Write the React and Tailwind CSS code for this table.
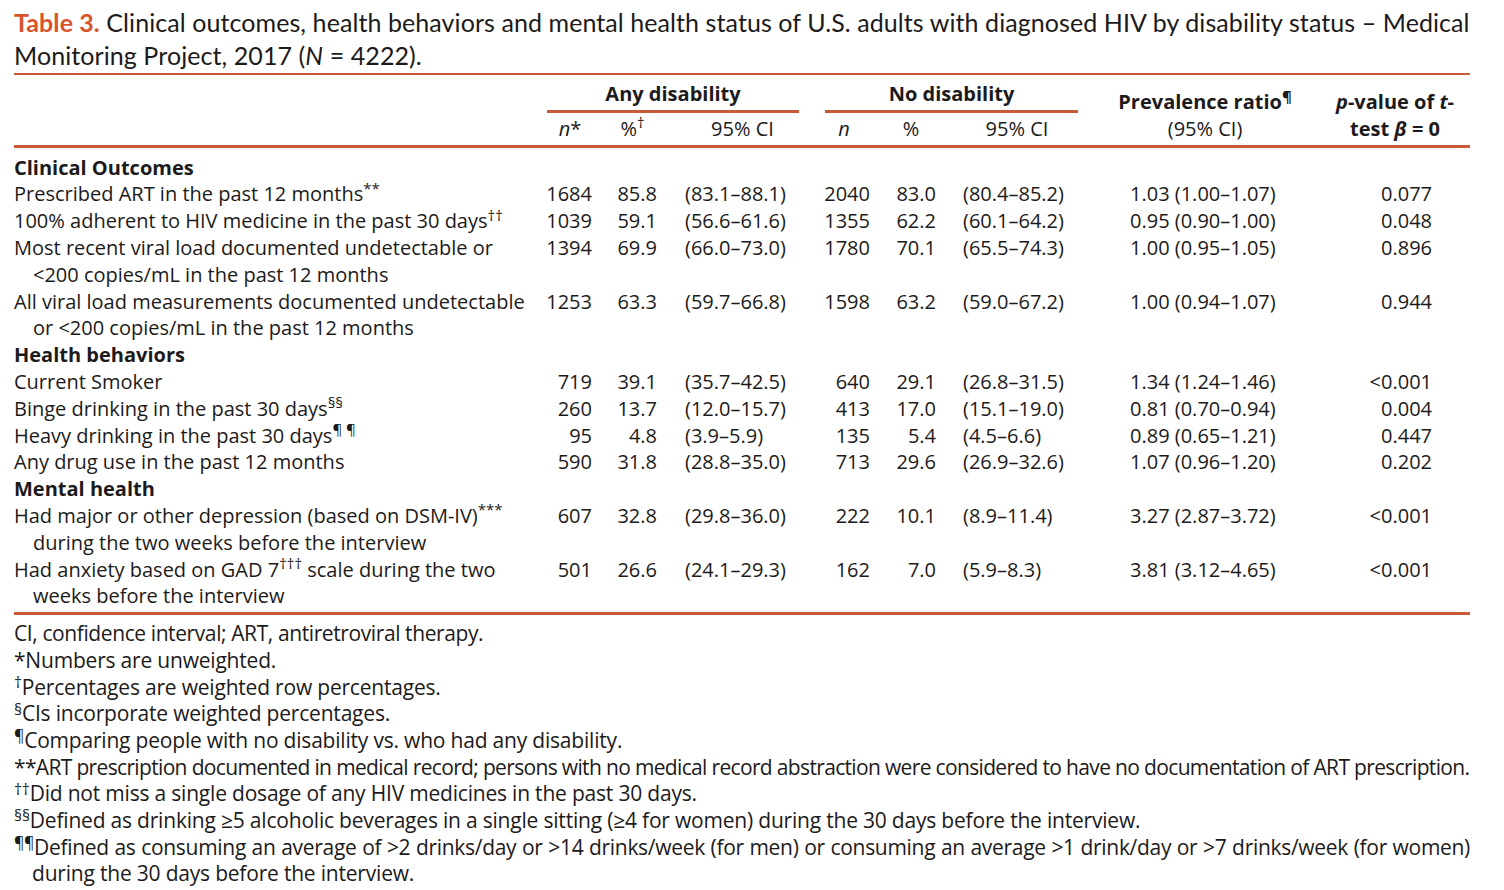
const rule = 'border-[#c75b39]';

const rows = [
  { section: 'Clinical Outcomes' },
  { label: <>Prescribed ART in the past 12 months<sup>**</sup></>, a: ['1684', '85.8', '(83.1–88.1)'], b: ['2040', '83.0', '(80.4–85.2)'], pr: '1.03 (1.00–1.07)', p: '0.077' },
  { label: <>100% adherent to HIV medicine in the past 30 days<sup>††</sup></>, a: ['1039', '59.1', '(56.6–61.6)'], b: ['1355', '62.2', '(60.1–64.2)'], pr: '0.95 (0.90–1.00)', p: '0.048' },
  { label: <>Most recent viral load documented undetectable or<br />&lt;200 copies/mL in the past 12 months</>, a: ['1394', '69.9', '(66.0–73.0)'], b: ['1780', '70.1', '(65.5–74.3)'], pr: '1.00 (0.95–1.05)', p: '0.896' },
  { label: <>All viral load measurements documented undetectable<br />or &lt;200 copies/mL in the past 12 months</>, a: ['1253', '63.3', '(59.7–66.8)'], b: ['1598', '63.2', '(59.0–67.2)'], pr: '1.00 (0.94–1.07)', p: '0.944' },
  { section: 'Health behaviors' },
  { label: 'Current Smoker', a: ['719', '39.1', '(35.7–42.5)'], b: ['640', '29.1', '(26.8–31.5)'], pr: '1.34 (1.24–1.46)', p: '<0.001' },
  { label: <>Binge drinking in the past 30 days<sup>§§</sup></>, a: ['260', '13.7', '(12.0–15.7)'], b: ['413', '17.0', '(15.1–19.0)'], pr: '0.81 (0.70–0.94)', p: '0.004' },
  { label: <>Heavy drinking in the past 30 days<sup>¶ ¶</sup></>, a: ['95', '4.8', '(3.9–5.9)'], b: ['135', '5.4', '(4.5–6.6)'], pr: '0.89 (0.65–1.21)', p: '0.447' },
  { label: 'Any drug use in the past 12 months', a: ['590', '31.8', '(28.8–35.0)'], b: ['713', '29.6', '(26.9–32.6)'], pr: '1.07 (0.96–1.20)', p: '0.202' },
  { section: 'Mental health' },
  { label: <>Had major or other depression (based on DSM-IV)<sup>***</sup><br />during the two weeks before the interview</>, a: ['607', '32.8', '(29.8–36.0)'], b: ['222', '10.1', '(8.9–11.4)'], pr: '3.27 (2.87–3.72)', p: '<0.001' },
  { label: <>Had anxiety based on GAD 7<sup>†††</sup> scale during the two<br />weeks before the interview</>, a: ['501', '26.6', '(24.1–29.3)'], b: ['162', '7.0', '(5.9–8.3)'], pr: '3.81 (3.12–4.65)', p: '<0.001' },
];

const Mark = ({ children }) => <sup className="-top-[0.42em]">{children}</sup>;

const App = () => {
  return (
    <div className="min-h-[890px] bg-white text-[#1c1a1a] font-['Open_Sans',sans-serif]">
      <div className="w-[1456px] ml-[14px] pt-[6px]">
        <h1 className="font-['Lato',sans-serif] text-[25px] leading-[33px] tracking-[0.08px]">
          <span className="font-bold text-[#d9542b]">Table 3.</span> Clinical outcomes, health behaviors and mental health status of U.S. adults with diagnosed HIV by disability status – Medical<br />
          Monitoring Project, 2017 (<i>N</i> = 4222).
        </h1>

        <div className={`mt-[1px] border-t-2 ${rule}`}>
          <table className="w-full table-fixed border-collapse text-[20px] leading-[26.8px]">
            <colgroup>
              <col className="w-[526px]" />
              <col className="w-[60px]" />
              <col className="w-[65px]" />
              <col className="w-[145px]" />
              <col className="w-[68px]" />
              <col className="w-[66px]" />
              <col className="w-[146px]" />
              <col className="w-[230px]" />
              <col className="w-[150px]" />
            </colgroup>
            <thead className={`border-b-[3px] ${rule}`}>
              <tr>
                <th></th>
                <th colSpan={3} className="p-0 pt-[6px] font-bold">
                  <div className={`ml-[7px] mr-[11px] border-b-[3px] ${rule} pb-[2px]`}>Any disability</div>
                </th>
                <th colSpan={3} className="p-0 pt-[6px] font-bold">
                  <div className={`ml-[15px] mr-[12px] border-b-[3px] ${rule} pb-[2px]`}>No disability</div>
                </th>
                <th rowSpan={2} className="p-0 pb-[2px] align-bottom">
                  <div className="font-bold">Prevalence ratio<sup>¶</sup></div>
                  <div className="font-normal">(95% CI)</div>
                </th>
                <th rowSpan={2} className="p-0 pb-[2px] align-bottom font-bold">
                  <div><i>p</i>-value of <i>t</i>-</div>
                  <div>test <i>β</i> = 0</div>
                </th>
              </tr>
              <tr>
                <th className="p-0"></th>
                <th className="p-0 pt-[3px] pb-[2px] font-normal"><i>n</i>*</th>
                <th className="p-0 pt-[3px] pb-[2px] font-normal">%<sup>†</sup></th>
                <th className="p-0 pt-[3px] pb-[2px] pl-[10px] font-normal">95% CI</th>
                <th className="p-0 pt-[3px] pb-[2px] font-normal"><i>n</i></th>
                <th className="p-0 pt-[3px] pb-[2px] font-normal">%</th>
                <th className="p-0 pt-[3px] pb-[2px] font-normal">95% CI</th>
              </tr>
            </thead>
            <tbody className={`border-b-[3px] ${rule}`}>
              {rows.map((r, i) => {
                const top = i === 0 ? 'pt-[7px]' : '';
                const bottom = i === rows.length - 1 ? 'pb-[2px]' : '';
                if (r.section) {
                  return (
                    <tr key={i}>
                      <td colSpan={9} className={`p-0 font-bold ${top}`}>{r.section}</td>
                    </tr>
                  );
                }
                return (
                  <tr key={i} className="align-top">
                    <td className={`p-0 pl-[19px] -indent-[19px] ${bottom}`}>{r.label}</td>
                    <td className="p-0 pr-[8px] text-right">{r.a[0]}</td>
                    <td className="p-0 pr-[8px] text-right">{r.a[1]}</td>
                    <td className="p-0 pl-[20px]">{r.a[2]}</td>
                    <td className="p-0 pr-[8px] text-right">{r.b[0]}</td>
                    <td className="p-0 pr-[8px] text-right">{r.b[1]}</td>
                    <td className="p-0 pl-[19px]">{r.b[2]}</td>
                    <td className="p-0 pl-[40px]">{r.pr}</td>
                    <td className="p-0 pr-[38px] text-right">{r.p}</td>
                  </tr>
                );
              })}
            </tbody>
          </table>
        </div>

        <div className="pt-[5px] text-[21px] leading-[26.7px] tracking-[-0.2px]">
          <p className="tracking-[-0.4px]">CI, confidence interval; ART, antiretroviral therapy.</p>
          <p>*Numbers are unweighted.</p>
          <p><Mark>†</Mark>Percentages are weighted row percentages.</p>
          <p><Mark>§</Mark>CIs incorporate weighted percentages.</p>
          <p><Mark>¶</Mark>Comparing people with no disability vs. who had any disability.</p>
          <p className="whitespace-nowrap tracking-[-0.66px]">**ART prescription documented in medical record; persons with no medical record abstraction were considered to have no documentation of ART prescription.</p>
          <p><Mark>††</Mark>Did not miss a single dosage of any HIV medicines in the past 30 days.</p>
          <p><Mark>§§</Mark>Defined as drinking ≥5 alcoholic beverages in a single sitting (≥4 for women) during the 30 days before the interview.</p>
          <p>
            <span className="block text-justify [text-align-last:justify] tracking-[-0.3px]"><Mark>¶¶</Mark>Defined as consuming an average of &gt;2 drinks/day or &gt;14 drinks/week (for men) or consuming an average &gt;1 drink/day or &gt;7 drinks/week (for women)</span>
            <span className="block pl-[18px]">during the 30 days before the interview.</span>
          </p>
        </div>
      </div>
    </div>
  );
};

export default App;
